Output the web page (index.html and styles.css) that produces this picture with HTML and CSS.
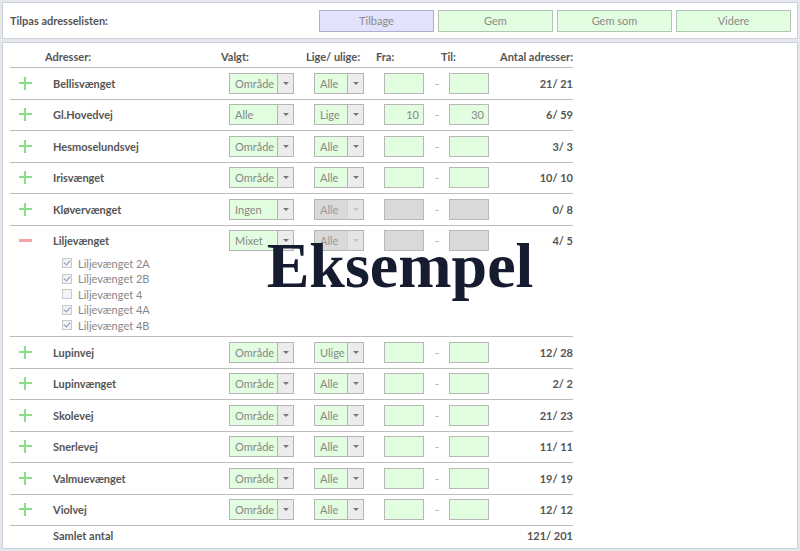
FILE: index.html
```html
<!DOCTYPE html>
<html lang="da">
<head>
    <meta charset="UTF-8">
    <title>Tilpas adresselisten</title>
    <link rel="stylesheet" href="styles.css">
</head>
<body>
    <div class="page">
        <div class="toolbar">
            <span class="toolbar-title">Tilpas adresselisten:</span>
            <div class="toolbar-buttons">
                <button class="btn btn-back">Tilbage</button>
                <button class="btn">Gem</button>
                <button class="btn">Gem som</button>
                <button class="btn">Videre</button>
            </div>
        </div>

        <div class="list-panel">
            <div class="list">
                <div class="row head">
                    <span></span>
                    <span class="h">Adresser:</span>
                    <span class="h">Valgt:</span>
                    <span class="h">Lige/ ulige:</span>
                    <span class="h">Fra:</span>
                    <span></span>
                    <span class="h">Til:</span>
                    <span class="h count">Antal adresser:</span>
                </div>

                <div class="row">
                    <span class="toggle plus"></span>
                    <span class="name">Bellisvænget</span>
                    <span class="select wide"><span class="val">Område</span><span class="arrow"></span></span>
                    <span class="select"><span class="val">Alle</span><span class="arrow"></span></span>
                    <span class="num"></span><span class="dash">-</span><span class="num"></span>
                    <span class="count">21/ 21</span>
                </div>

                <div class="row">
                    <span class="toggle plus"></span>
                    <span class="name">Gl.Hovedvej</span>
                    <span class="select wide"><span class="val">Alle</span><span class="arrow"></span></span>
                    <span class="select"><span class="val">Lige</span><span class="arrow"></span></span>
                    <span class="num">10</span><span class="dash">-</span><span class="num">30</span>
                    <span class="count">6/ 59</span>
                </div>

                <div class="row">
                    <span class="toggle plus"></span>
                    <span class="name">Hesmoselundsvej</span>
                    <span class="select wide"><span class="val">Område</span><span class="arrow"></span></span>
                    <span class="select"><span class="val">Alle</span><span class="arrow"></span></span>
                    <span class="num"></span><span class="dash">-</span><span class="num"></span>
                    <span class="count">3/ 3</span>
                </div>

                <div class="row">
                    <span class="toggle plus"></span>
                    <span class="name">Irisvænget</span>
                    <span class="select wide"><span class="val">Område</span><span class="arrow"></span></span>
                    <span class="select"><span class="val">Alle</span><span class="arrow"></span></span>
                    <span class="num"></span><span class="dash">-</span><span class="num"></span>
                    <span class="count">10/ 10</span>
                </div>

                <div class="row">
                    <span class="toggle plus"></span>
                    <span class="name">Kløvervænget</span>
                    <span class="select wide"><span class="val">Ingen</span><span class="arrow"></span></span>
                    <span class="select off"><span class="val">Alle</span><span class="arrow"></span></span>
                    <span class="num off"></span><span class="dash">-</span><span class="num off"></span>
                    <span class="count">0/ 8</span>
                </div>

                <div class="row open">
                    <span class="toggle minus"></span>
                    <span class="name">Liljevænget</span>
                    <span class="select wide"><span class="val">Mixet</span><span class="arrow"></span></span>
                    <span class="select off"><span class="val">Alle</span><span class="arrow"></span></span>
                    <span class="num off"></span><span class="dash">-</span><span class="num off"></span>
                    <span class="count">4/ 5</span>
                    <div class="sublist">
                        <div class="sub"><span class="check on"></span>Liljevænget 2A</div>
                        <div class="sub"><span class="check on"></span>Liljevænget 2B</div>
                        <div class="sub"><span class="check"></span>Liljevænget 4</div>
                        <div class="sub"><span class="check on"></span>Liljevænget 4A</div>
                        <div class="sub"><span class="check on"></span>Liljevænget 4B</div>
                    </div>
                </div>

                <div class="row">
                    <span class="toggle plus"></span>
                    <span class="name">Lupinvej</span>
                    <span class="select wide"><span class="val">Område</span><span class="arrow"></span></span>
                    <span class="select"><span class="val">Ulige</span><span class="arrow"></span></span>
                    <span class="num"></span><span class="dash">-</span><span class="num"></span>
                    <span class="count">12/ 28</span>
                </div>

                <div class="row">
                    <span class="toggle plus"></span>
                    <span class="name">Lupinvænget</span>
                    <span class="select wide"><span class="val">Område</span><span class="arrow"></span></span>
                    <span class="select"><span class="val">Alle</span><span class="arrow"></span></span>
                    <span class="num"></span><span class="dash">-</span><span class="num"></span>
                    <span class="count">2/ 2</span>
                </div>

                <div class="row">
                    <span class="toggle plus"></span>
                    <span class="name">Skolevej</span>
                    <span class="select wide"><span class="val">Område</span><span class="arrow"></span></span>
                    <span class="select"><span class="val">Alle</span><span class="arrow"></span></span>
                    <span class="num"></span><span class="dash">-</span><span class="num"></span>
                    <span class="count">21/ 23</span>
                </div>

                <div class="row">
                    <span class="toggle plus"></span>
                    <span class="name">Snerlevej</span>
                    <span class="select wide"><span class="val">Område</span><span class="arrow"></span></span>
                    <span class="select"><span class="val">Alle</span><span class="arrow"></span></span>
                    <span class="num"></span><span class="dash">-</span><span class="num"></span>
                    <span class="count">11/ 11</span>
                </div>

                <div class="row">
                    <span class="toggle plus"></span>
                    <span class="name">Valmuevænget</span>
                    <span class="select wide"><span class="val">Område</span><span class="arrow"></span></span>
                    <span class="select"><span class="val">Alle</span><span class="arrow"></span></span>
                    <span class="num"></span><span class="dash">-</span><span class="num"></span>
                    <span class="count">19/ 19</span>
                </div>

                <div class="row">
                    <span class="toggle plus"></span>
                    <span class="name">Violvej</span>
                    <span class="select wide"><span class="val">Område</span><span class="arrow"></span></span>
                    <span class="select"><span class="val">Alle</span><span class="arrow"></span></span>
                    <span class="num"></span><span class="dash">-</span><span class="num"></span>
                    <span class="count">12/ 12</span>
                </div>

                <div class="row total">
                    <span></span>
                    <span class="name">Samlet antal</span>
                    <span></span><span></span><span></span><span></span><span></span>
                    <span class="count">121/ 201</span>
                </div>
            </div>
        </div>

        <div class="watermark">Eksempel</div>
    </div>
</body>
</html>
```

FILE: styles.css
```css
html, body {
    margin: 0;
    padding: 0;
}
body {
    font-family: Lato, 'Open Sans', sans-serif;
    font-size: 11px;
    color: #555;
    background: #e4e8ed;
}
.page {
    position: relative;
    width: 800px;
    height: 551px;
    padding: 2px 2px 0 2px;
    box-sizing: border-box;
}

/* toolbar */
.toolbar {
    display: flex;
    align-items: center;
    justify-content: space-between;
    height: 37px;
    box-sizing: border-box;
    background: #fff;
    border: 1px solid #cdd3db;
    padding: 0 6px 0 7px;
}
.toolbar-title {
    font-weight: bold;
    color: #555;
}
.toolbar-buttons {
    display: flex;
    gap: 4px;
}
.btn {
    width: 115px;
    height: 22px;
    font-family: Lato, sans-serif;
    font-size: 11px;
    color: #8a8a8a;
    background: #e2fde0;
    border: 1px solid #b4c4b4;
    padding: 0;
}
.btn-back {
    background: #e2e2fd;
    border-color: #b0b0cc;
}

/* list */
.list-panel {
    margin-top: 3px;
    height: 507px;
    box-sizing: border-box;
    background: #fff;
    border: 1px solid #cdd3db;
    padding: 2px 0 0 7px;
}
.list {
    width: 563px;
}
.row {
    display: grid;
    grid-template-columns: 43px 176px 85px 70px 45px 20px 50px 74px;
    align-items: center;
    height: 31.5px;
    border-bottom: 1px solid #bdbdbd;
    box-sizing: border-box;
}
.row.head {
    height: 23px;
}
.row.head .h {
    font-weight: bold;
    margin-left: -8px;
}
.row.head .h.count {
    margin-left: 0;
}
.row.open {
    height: auto;
    grid-template-rows: 30px auto;
}
.row.total {
    border-bottom: none;
    height: 18px;
}
.toggle {
    position: relative;
    width: 13px;
    height: 13px;
    margin-left: 9px;
}
.toggle.plus::before,
.toggle.plus::after,
.toggle.minus::before {
    content: "";
    position: absolute;
}
.toggle.plus::before {
    left: 0;
    top: 5px;
    width: 13px;
    height: 2px;
    background: #8ade8a;
}
.toggle.plus::after {
    left: 5px;
    top: 0;
    width: 2px;
    height: 13px;
    background: #8ade8a;
}
.toggle.minus::before {
    left: 0;
    top: 5px;
    width: 13px;
    height: 3px;
    background: #f4a4a4;
}
.name {
    font-weight: bold;
}
.select {
    display: flex;
    width: 50px;
    height: 21px;
    box-sizing: border-box;
    border: 1px solid #b4b4b4;
    background: #e2fde0;
}
.select.wide {
    width: 65px;
}
.select .val {
    flex: 1;
    color: #888;
    padding-left: 5px;
    line-height: 19px;
}
.select .arrow {
    position: relative;
    width: 15px;
    border-left: 1px solid #b4b4b4;
    background: #ececec;
}
.select .arrow::after {
    content: "";
    position: absolute;
    left: 5px;
    top: 8px;
    border-left: 3px solid transparent;
    border-right: 3px solid transparent;
    border-top: 3px solid #777;
}
.select.off {
    background: #d9d9d9;
}
.select.off .val {
    color: #9a9a9a;
}
.select.off .arrow {
    background: #e4e4e4;
    border-left-color: #d0d0d0;
}
.select.off .arrow::after {
    border-top-color: #c4c4c4;
}
.num {
    width: 40px;
    height: 21px;
    box-sizing: border-box;
    border: 1px solid #b8b8b8;
    background: #e2fde0;
    color: #888;
    text-align: right;
    padding-right: 4px;
    line-height: 19px;
}
.num.off {
    background: #d9d9d9;
}
.dash {
    color: #aaa;
    padding-left: 6px;
}
.count {
    font-weight: bold;
    text-align: right;
}

/* expanded street */
.sublist {
    grid-column: 2 / 9;
    padding: 0 0 3px 9px;
}
.sub {
    display: flex;
    align-items: center;
    height: 15.5px;
    color: #888;
}
.check {
    position: relative;
    width: 10px;
    height: 10px;
    box-sizing: border-box;
    border: 1px solid #c8c8c8;
    background: #f3f3f3;
    margin-right: 6px;
}
.check.on::after {
    content: "";
    position: absolute;
    left: 2px;
    top: 0;
    width: 3px;
    height: 5px;
    border: solid #8c94b4;
    border-width: 0 1px 1px 0;
    transform: rotate(40deg);
}

.watermark {
    position: absolute;
    left: 0;
    right: 0;
    top: 234px;
    text-align: center;
    font-family: 'Liberation Serif', 'Times New Roman', serif;
    font-weight: bold;
    font-size: 64px;
    line-height: 1;
    color: #161c30;
}
```
